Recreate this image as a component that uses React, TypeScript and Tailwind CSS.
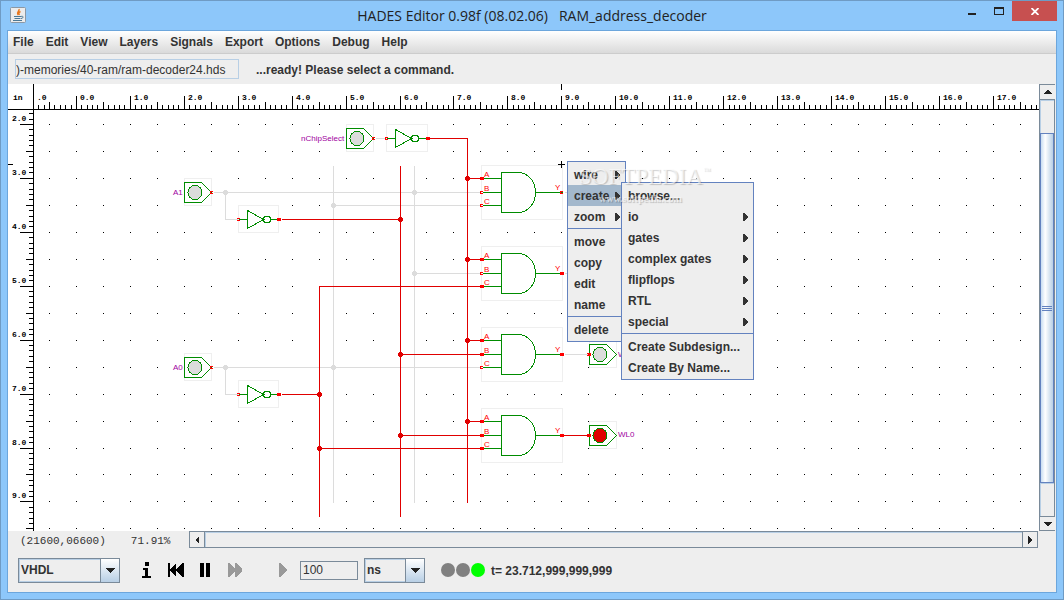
import { ReactNode } from 'react';

const GREEN = '#008c00';
const RED = '#e00000';
const PIN = '#ff0000';
const GRAY = '#dcdcdc';
const PURPLE = '#a000a0';

const MENUS = ['File', 'Edit', 'View', 'Layers', 'Signals', 'Export', 'Options', 'Debug', 'Help'];

type Entry = { label: string; sub?: boolean; active?: boolean } | null; // null = separator

const POPUP: Entry[] = [
  { label: 'wire', sub: true },
  { label: 'create', sub: true, active: true },
  { label: 'zoom', sub: true },
  null,
  { label: 'move' },
  { label: 'copy' },
  { label: 'edit' },
  { label: 'name' },
  null,
  { label: 'delete' },
];

const SUBMENU: Entry[] = [
  { label: 'browse...' },
  { label: 'io', sub: true },
  { label: 'gates', sub: true },
  { label: 'complex gates', sub: true },
  { label: 'flipflops', sub: true },
  { label: 'RTL', sub: true },
  { label: 'special', sub: true },
  null,
  { label: 'Create Subdesign...' },
  { label: 'Create By Name...' },
];

// half an inch on the sheet, in screen pixels
const HALF = 26.967;
const gridX = (k: number) => Math.floor(76.4 + HALF * k);
const gridY = (k: number) => Math.floor(124.4 + HALF * k);
const range = (from: number, to: number) => Array.from({ length: to - from + 1 }, (_, i) => from + i);

function Rulers() {
  // one tick per tenth of an inch
  const hTicks = range(-7, 178).map((n) => ({ n, x: Math.floor(76.4 + (HALF * n) / 5) }));
  const vTicks = range(-2, 75).map((n) => ({ n, y: Math.floor(124.4 + (HALF * n) / 5) }));
  return (
    <g fontFamily='"Liberation Mono", monospace' fontSize="8" fontWeight="bold">
      <rect x="8" y="109" width="1400" height="1" />
      <rect x="33" y="84" width="1" height="900" />
      {hTicks.map(({ n, x }) => {
        const h = n % 10 === 0 ? 13 : n % 5 === 0 ? 7 : 4;
        return <rect key={n} x={x} y={109 - h} width="1" height={h} />;
      })}
      {vTicks.map(({ n, y }) => {
        const w = n % 10 === 0 ? 13 : n % 5 === 0 ? 7 : 4;
        return <rect key={n} x={33 - w} y={y} width={w} height="1" />;
      })}
      <text x="13" y="100">in</text>
      <text x="37" y="100">.0</text>
      {range(0, 17).map((n) => (
        <text key={n} x={gridX(n * 2) + 4} y="100">{n}.0</text>
      ))}
      {range(2, 9).map((n) => (
        <text key={n} x="12" y={gridY((n - 2) * 2) - 3}>{n}.0</text>
      ))}
      <rect x="561" y="84" width="1" height="6" />
      <rect x="8" y="164" width="5" height="1" />
    </g>
  );
}

function Wire({ points, color = RED }: { points: string; color?: string }) {
  return <polyline points={points} fill="none" stroke={color} transform="translate(0.5 0.5)" />;
}

function Node({ x, y, color = RED }: { x: number; y: number; color?: string }) {
  return <path d={`M${x - 1} ${y - 2}h3v1h1v3h-1v1h-3v-1h-1v-3h1z`} fill={color} />;
}

function Pin({ x, y, high }: { x: number; y: number; high?: boolean }) {
  if (high) return <rect x={x - 1} y={y - 1} width="4" height="3" fill={PIN} />;
  return <path d={`M${x - 1} ${y - 1}h3v1h-2v1h2v1h-3z`} fill={PIN} />;
}

function Frame({ x, y, w, h }: { x: number; y: number; w: number; h: number }) {
  return <rect x={x + 0.5} y={y + 0.5} width={w} height={h} fill="#fff" stroke="#efefef" />;
}

function Label({ x, y, color = PIN, children }: { x: number; y: number; color?: string; children: ReactNode }) {
  return (
    <text x={x} y={y} fill={color} fontSize="8" fontFamily='"Liberation Sans", sans-serif'>
      {children}
    </text>
  );
}

function Port({ x, y, fill = GRAY, output }: { x: number; y: number; fill?: string; output?: boolean }) {
  return (
    <g>
      <Frame x={x} y={y - 14} w={27} h={27} />
      <g transform="translate(0.5 0.5)" stroke={GREEN} fill="none">
        <path d={`M${x} ${y - 10}h17l10 10l-10 10h-17z`} />
        <circle cx={x + 10.5} cy={y} r="7" fill={fill} />
      </g>
      <Pin x={output ? x - 1 : x + 27} y={y} high={output} />
    </g>
  );
}

function Inverter({ x, y, w = 40 }: { x: number; y: number; w?: number }) {
  return (
    <g>
      <Frame x={x} y={y - 14} w={w} h={27} />
      <g transform="translate(0.5 0.5)" stroke={GREEN} fill="none">
        <path d={`M${x} ${y}h9M${x + 9} ${y - 9}l16 9l-16 9zM${x + 32} ${y}h8`} />
        <circle cx={x + 28.5} cy={y} r="3.5" />
      </g>
      <Pin x={x} y={y} />
      <Pin x={x + w} y={y} high />
    </g>
  );
}

function AndGate({ y, inputs, high = true }: { y: number; inputs: boolean[]; high?: boolean }) {
  const rows = [y - 14, y, y + 13];
  return (
    <g>
      <Frame x={481} y={y - 27} w={81} h={54} />
      <g transform="translate(0.5 0.5)" stroke={GREEN} fill="none">
        {rows.map((r) => (
          <path key={r} d={`M482 ${r}h19`} />
        ))}
        <path d={`M501 ${y - 20}h16C528 ${y - 20} 535 ${y - 11} 535 ${y}S528 ${y + 20} 517 ${y + 20}h-16zM535 ${y}h27`} />
      </g>
      {rows.map((r, i) => (
        <g key={r}>
          <Pin x={481} y={r} high={inputs[i]} />
          <Label x={484} y={r - 1}>{'ABC'[i]}</Label>
        </g>
      ))}
      <Pin x={561} y={y} high={high} />
      <Label x={555} y={y - 2}>Y</Label>
    </g>
  );
}

function Schematic() {
  return (
    <svg className="block h-full w-full" shapeRendering="crispEdges" role="img" aria-label="RAM address decoder">
      <g transform="translate(-8 -84)">
        {range(-1, 35).map((i) =>
          range(0, 15).map((j) => <rect key={`${i},${j}`} x={gridX(i)} y={gridY(j)} width="1" height="1" />),
        )}
        <Rulers />

        <Port x={184} y={192} />
        <Port x={184} y={367} />
        <Port x={346} y={138} />
        <Port x={589} y={354} output />
        <Port x={589} y={435} fill={RED} output />
        <Inverter x={238} y={219} />
        <Inverter x={238} y={394} />
        <Inverter x={386} y={138} w={41} />
        <AndGate y={192} inputs={[true, false, false]} high={false} />
        <AndGate y={273} inputs={[true, false, true]} />
        <AndGate y={354} inputs={[true, true, false]} />
        <AndGate y={435} inputs={[true, true, true]} />

        <Wire color={GRAY} points="213,192 479,192" />
        <Wire color={GRAY} points="225,192 225,219 237,219" />
        <Wire color={GRAY} points="213,367 479,367" />
        <Wire color={GRAY} points="225,367 225,394 237,394" />
        <Wire color={GRAY} points="375,138 384,138" />
        <Wire color={GRAY} points="333,165 333,502" />
        <Wire color={GRAY} points="414,165 414,502" />
        <Wire color={GRAY} points="333,205 479,205" />
        <Wire color={GRAY} points="414,273 479,273" />
        <Wire color={GRAY} points="564,192 589,192" />
        <Wire color={GRAY} points="564,273 589,273" />
        <Wire color={GRAY} points="564,354 587,354" />
        <Node x={225} y={192} color={GRAY} />
        <Node x={414} y={192} color={GRAY} />
        <Node x={333} y={205} color={GRAY} />
        <Node x={414} y={273} color={GRAY} />
        <Node x={225} y={367} color={GRAY} />
        <Node x={333} y={367} color={GRAY} />

        <Wire points="428,138 467,138 467,502" />
        <Wire points="400,165 400,516" />
        <Wire points="480,286 319,286 319,516" />
        <Wire points="281,219 400,219" />
        <Wire points="281,394 319,394" />
        <Wire points="400,354 480,354" />
        <Wire points="400,435 480,435" />
        <Wire points="319,448 480,448" />
        <Wire points="563,435 588,435" />
        {[178, 259, 340, 421].map((y) => (
          <g key={y}>
            <Wire points={`467,${y} 480,${y}`} />
            <Node x={467} y={y} />
          </g>
        ))}
        <Node x={400} y={219} />
        <Node x={400} y={354} />
        <Node x={400} y={435} />
        <Node x={319} y={394} />
        <Node x={319} y={448} />

        <Label x={173} y={195} color={PURPLE}>A1</Label>
        <Label x={173} y={370} color={PURPLE}>A0</Label>
        <Label x={301} y={141} color={PURPLE}>nChipSelect</Label>
        <Label x={618} y={357} color={PURPLE}>WL1</Label>
        <Label x={618} y={437} color={PURPLE}>WL0</Label>

        <path d="M558 164.5h7M561.5 161v7" stroke="#000" />
      </g>
    </svg>
  );
}

function Menu({ entries, className }: { entries: Entry[]; className: string }) {
  return (
    <div role="menu" className={`absolute border border-[#6382bf] bg-[#eeeeee] pt-0.5 pb-px ${className}`}>
      {entries.map((entry, i) =>
        entry ? (
          <button
            key={entry.label}
            role="menuitem"
            className={`flex h-[21px] w-full items-center justify-between pr-[5px] pl-1.5 text-left font-bold whitespace-nowrap ${
              entry.active ? 'bg-[#a3b8cc]' : ''
            }`}
          >
            {entry.label}
            {entry.sub && (
              <svg className="h-2 w-[5px]" viewBox="0 0 5 8" shapeRendering="crispEdges" aria-hidden="true">
                <path d="M0 0h1l4 4-4 4h-1z" fill="#333" />
              </svg>
            )}
          </button>
        ) : (
          <div key={i} role="separator" className="mt-px mb-0.5 h-px bg-[#6382bf]" />
        ),
      )}
    </div>
  );
}

function ScrollButton({ label, path, className }: { label: string; path: string; className: string }) {
  return (
    <button aria-label={label} className={`flex h-[15px] w-[15px] shrink-0 items-center justify-center border-[#7a8a99] bg-[#eeeeee] ${className}`}>
      <svg className="h-2.5 w-2.5" viewBox="0 0 10 10" shapeRendering="crispEdges" aria-hidden="true">
        <path d={path} fill="#222" />
      </svg>
    </button>
  );
}

function VerticalScroll() {
  return (
    <div className="mr-px flex w-4 shrink-0 flex-col border-t border-r border-l border-[#7a8a99]">
      <ScrollButton label="Scroll up" path="M4 3h2l3 4H1z" className="border-b" />
      <div className="flex-[32] border-t border-l border-[#b8cfe5] bg-[#eeeeee]" />
      <div className="flex flex-[350] items-center justify-center border border-[#6382bf] bg-linear-to-r from-[#c8ddf2] via-white via-35% to-[#b8cfe5]">
        <div className="flex w-2.5 flex-col gap-px">
          <div className="h-px bg-[#6382bf]" />
          <div className="h-px bg-[#6382bf]" />
          <div className="h-px bg-[#6382bf]" />
        </div>
      </div>
      <div className="flex-[32] border-t border-l border-[#b8cfe5] bg-[#eeeeee]" />
      <ScrollButton label="Scroll down" path="M1 3h8L6 7H4z" className="border-t border-b" />
    </div>
  );
}

function HorizontalScroll() {
  return (
    <div className="mr-[18px] flex h-[17px] flex-1 border border-[#7a8a99]">
      <ScrollButton label="Scroll left" path="M7 1v8L3 5z" className="border-r" />
      <div className="flex-1 border-t border-l border-[#b8cfe5] bg-[#eeeeee]" />
      <ScrollButton label="Scroll right" path="M3 1v8l4-4z" className="border-l" />
    </div>
  );
}

function Combo({ label, value, className }: { label: string; value: string; className: string }) {
  return (
    <div className={`relative h-[25px] ${className}`}>
      <select
        aria-label={label}
        defaultValue={value}
        className="h-full w-full appearance-none border border-[#7a8a99] bg-[#eeeeee] pl-0.5 font-bold outline-1 -outline-offset-2 outline-[#b8cfe5]"
      >
        <option>{value}</option>
      </select>
      <div className="pointer-events-none absolute inset-y-0 right-0 flex w-5 items-center justify-center border border-[#7a8a99] bg-linear-to-b from-white to-[#b8cfe5]">
        <svg className="h-[5px] w-2.5" viewBox="0 0 10 5" shapeRendering="crispEdges" aria-hidden="true">
          <path d="M0 0h10L5 5z" fill="#222" />
        </svg>
      </div>
    </div>
  );
}

function JavaIcon() {
  return (
    <svg className="h-4 w-4" viewBox="0 0 16 16" aria-hidden="true">
      <rect x="0.5" y="0.5" width="15" height="15" rx="1" fill="#ececec" stroke="#8b98a5" />
      <path d="M9 2C10 4 6 5 8 8M10.5 4.5C8.5 5.5 8.5 6.5 9.5 8" fill="none" stroke="#e8761c" strokeWidth="1.4" />
      <path d="M4 9.5h7M4.5 11.5h6M3 13.5h9M11 9.5c3-1 2.5 2 0 2" fill="none" stroke="#4a7896" />
    </svg>
  );
}

function TransportButton({ label, className, path, fill = '#000' }: { label: string; className: string; path: string; fill?: string }) {
  return (
    <button aria-label={label} className={`h-4 ${className}`}>
      <svg className="block h-4 w-full" shapeRendering="crispEdges" aria-hidden="true">
        <path d={path} fill={fill} />
      </svg>
    </button>
  );
}

export default function App() {
  return (
    <div className="flex h-screen flex-col border border-[#6f9bc4] bg-[#8dc7fa] px-1.5 pb-1.5 font-['Liberation_Sans',Arial,sans-serif] text-[12px] text-[#333333]">
      <header className="relative flex h-[29px] shrink-0 items-start">
        <div className="mt-1.5 ml-[3px]">
          <JavaIcon />
        </div>
        <h1 className="absolute inset-x-0 top-0 text-center font-['Open_Sans',sans-serif] text-[14px] leading-[29px] whitespace-pre text-[#222]">
          {'HADES Editor 0.98f (08.02.06)   RAM_address_decoder'}
        </h1>
        <div className="relative ml-auto flex h-5">
          <button aria-label="Minimize" className="flex w-7 justify-center pt-3">
            <span className="h-0.5 w-2 bg-[#222]" />
          </button>
          <button aria-label="Maximize" className="flex w-[26px] justify-center pt-1.5">
            <span className="h-2 w-2.5 border border-t-2 border-[#222]" />
          </button>
          <button aria-label="Close" className="flex w-[45px] items-center justify-center bg-[#c75050]">
            <svg className="h-[7px] w-2" viewBox="0 0 8 7" aria-hidden="true">
              <path d="M0.5 0L7.5 7M7.5 0L0.5 7" stroke="#fff" strokeWidth="1.8" />
            </svg>
          </button>
        </div>
      </header>

      <main className="flex min-h-0 flex-1 flex-col border border-[#6ca6dc] bg-[#eeeeee]">
        <nav className="flex h-[23px] shrink-0 items-center gap-3 border-b border-[#cccccc] bg-linear-to-b from-white to-[#dadada] pl-[5px]">
          {MENUS.map((menu) => (
            <button key={menu} className="font-bold">
              {menu}
            </button>
          ))}
        </nav>

        <div className="flex h-[30px] shrink-0 items-center gap-[17px] pl-[7px]">
          <input
            aria-label="Design file"
            defaultValue=")-memories/40-ram/ram-decoder24.hds"
            className="h-5 w-56 border border-[#b8cfe5] bg-[#eeeeee] pt-px"
          />
          <p className="pt-px font-bold">...ready! Please select a command.</p>
        </div>

        <div className="flex min-h-0 flex-1">
          <div className="relative min-w-0 flex-1 overflow-hidden bg-white">
            <Schematic />
            <Menu entries={POPUP} className="top-[77px] left-[559px] w-[59px]" />
            <Menu entries={SUBMENU} className="top-[98px] left-[613px] w-[133px]" />
            <div className="pointer-events-none absolute top-[79px] left-[571px] font-['Liberation_Serif',serif] text-white/60 [text-shadow:1px_1px_1px_#00000033]">
              <p className="flex items-start text-[23px] leading-7">
                SOFTPEDIA<span className="text-[8px] leading-4">™</span>
              </p>
              <p className="pl-5 text-[10px] leading-4 font-bold">www.softpedia.com</p>
            </div>
          </div>
          <VerticalScroll />
        </div>

        <div className="flex h-[17px] shrink-0 items-center">
          <div className="flex w-[181px] gap-[25px] pt-[3px] pl-3 font-['Liberation_Mono',monospace] text-[11px] leading-[14px]">
            <span>(21600,06600)</span>
            <span>71.91%</span>
          </div>
          <HorizontalScroll />
        </div>

        <div className="flex h-11 shrink-0 items-center pl-2.5">
          <Combo label="Language" value="VHDL" className="w-[102px]" />
          <TransportButton label="Info" className="ml-[22px] w-[9px]" path="M3 0h4v4H3zM1 6h5v8h3v2H0v-2h3V8H1z" />
          <TransportButton label="Restart" className="ml-[17px] w-4" path="M0 1h2v6l6-6v6l6-6h2v14h-2l-6-6v6L2 9v6H0z" />
          <TransportButton label="Pause" className="ml-4 w-2.5" path="M0 1h4v14H0zM6 1h4v14H6z" />
          <TransportButton label="Fast forward" className="ml-[18px] w-[14px]" path="M0 1h1l6 6V1h1l6 6v2l-6 6H7V9l-6 6H0z" fill="#999" />
          <TransportButton label="Step" className="ml-[37px] w-2" path="M0 1h1l7 6v2l-7 6H0z" fill="#999" />
          <input
            aria-label="Step width"
            defaultValue="100"
            className="ml-[13px] h-[19px] w-[58px] border border-[#7a8a99] bg-[#eeeeee] pl-0.5"
          />
          <Combo label="Time unit" value="ns" className="ml-1.5 w-[61px]" />
          <div className="ml-4 flex gap-px">
            <span className="h-3.5 w-3.5 rounded-full bg-[#808080]" />
            <span className="h-3.5 w-3.5 rounded-full bg-[#808080]" />
            <span className="h-3.5 w-3.5 rounded-full bg-[#00ff00]" />
          </div>
          <p className="ml-1.5 pt-px font-bold">t= 23.712,999,999,999</p>
        </div>
      </main>
    </div>
  );
}
